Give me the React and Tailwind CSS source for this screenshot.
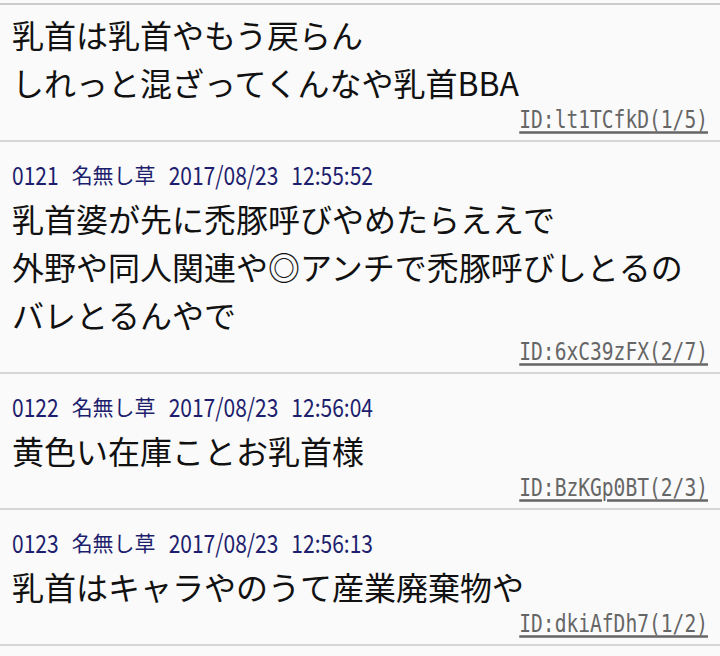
import React from 'react';

const posts = [
  {
    head: null,
    lines: ['乳首は乳首やもう戻らん', 'しれっと混ざってくんなや乳首BBA'],
    id: 'ID:lt1TCfkD(1/5)',
  },
  {
    head: ['0121', '名無し草', '2017/08/23', '12:55:52'],
    lines: ['乳首婆が先に禿豚呼びやめたらええで', '外野や同人関連や◎アンチで禿豚呼びしとるの', 'バレとるんやで'],
    id: 'ID:6xC39zFX(2/7)',
  },
  {
    head: ['0122', '名無し草', '2017/08/23', '12:56:04'],
    lines: ['黄色い在庫ことお乳首様'],
    id: 'ID:BzKGp0BT(2/3)',
  },
  {
    head: ['0123', '名無し草', '2017/08/23', '12:56:13'],
    lines: ['乳首はキャラやのうて産業廃棄物や'],
    id: 'ID:dkiAfDh7(1/2)',
  },
];

const Post = ({ post }) => (
  <div
    className={
      'border-b-2 border-[#d6d6d6] px-3 pb-[6px] ' + (post.head ? 'pt-[18px]' : 'pt-[5px]')
    }
  >
    {post.head && (
      <div className="flex gap-[13px] text-[21px] leading-[28px] text-[#1e1e6e] mb-[6px]">
        {post.head.map((h, i) => (
          <span key={h} className={i === 1 ? '' : 'inline-block scale-y-[1.2]'}>
            {h}
          </span>
        ))}
      </div>
    )}
    <div className="text-[32px] leading-[48px] text-[#111111] whitespace-nowrap">
      {post.lines.map((l) => (
        <div key={l}>{l}</div>
      ))}
    </div>
    <div className="flex justify-end h-[28px] items-center">
      <span className="inline-block scale-y-[1.25] font-['DejaVu_Sans_Mono',monospace] text-[19.6px] leading-[28px] text-[#666666] underline decoration-[#666666] decoration-[1.6px] underline-offset-[3px]">
        {post.id}
      </span>
    </div>
  </div>
);

export default function App() {
  return (
    <div className="w-[720px] h-[656px] overflow-hidden bg-[#fafafa] font-['Noto_Sans_CJK_JP',sans-serif]">
      <div className="h-[3px]" />
      <div className="border-t-2 border-[#cccccc]">
        {posts.map((p, i) => (
          <Post key={i} post={p} />
        ))}
      </div>
    </div>
  );
}
